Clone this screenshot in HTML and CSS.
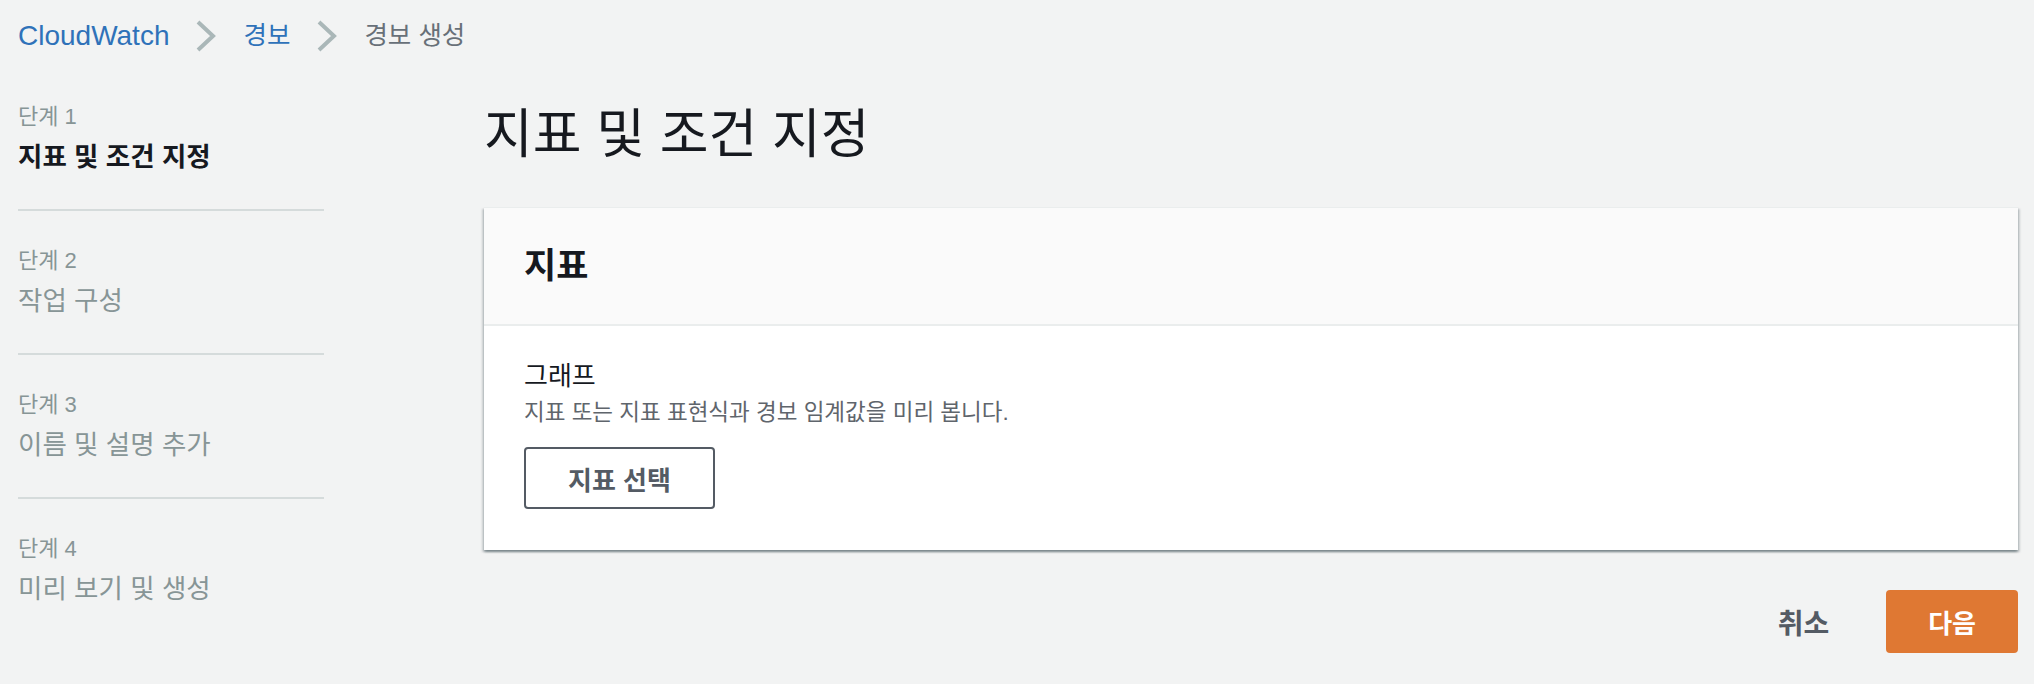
FILE: index.html
```html
<!DOCTYPE html>
<html lang="ko">
<head>
<meta charset="utf-8">
<title>경보 생성 - CloudWatch</title>
<link rel="stylesheet" href="styles.css">
</head>
<body>
<nav class="breadcrumbs">
  <a class="crumb crumb-en" href="#">CloudWatch</a>
  <svg class="chev" width="20" height="32" viewBox="0 0 20 32"><polyline points="2,2 17,16 2,30" fill="none" stroke="#aab7b8" stroke-width="4"/></svg>
  <a class="crumb crumb-ko" href="#">경보</a>
  <svg class="chev" width="20" height="32" viewBox="0 0 20 32"><polyline points="2,2 17,16 2,30" fill="none" stroke="#aab7b8" stroke-width="4"/></svg>
  <span class="crumb crumb-ko current">경보 생성</span>
</nav>
<div class="layout">
  <ol class="steps">
    <li class="step active"><div class="step-label">단계 1</div><div class="step-title">지표 및 조건 지정</div></li>
    <li class="step"><div class="step-label">단계 2</div><div class="step-title">작업 구성</div></li>
    <li class="step"><div class="step-label">단계 3</div><div class="step-title">이름 및 설명 추가</div></li>
    <li class="step"><div class="step-label">단계 4</div><div class="step-title">미리 보기 및 생성</div></li>
  </ol>
  <main class="main">
    <h1 class="page-title">지표 및 조건 지정</h1>
    <section class="card">
      <header class="card-header"><h2 class="card-title">지표</h2></header>
      <div class="card-body">
        <div class="field-label">그래프</div>
        <div class="field-desc">지표 또는 지표 표현식과 경보 임계값을 미리 봅니다.</div>
        <button class="btn btn-normal" type="button">지표 선택</button>
      </div>
    </section>
    <div class="actions">
      <button class="btn-link" type="button">취소</button>
      <button class="btn btn-primary" type="button">다음</button>
    </div>
  </main>
</div>
</body>
</html>
```
FILE: styles.css
```css
* { box-sizing: border-box; }
html, body { margin: 0; padding: 0; }
body {
  background: #f2f3f3;
  font-family: "Liberation Sans", "Noto Sans CJK KR", sans-serif;
  color: #16191f;
  width: 2034px;
  height: 684px;
  overflow: hidden;
}

.breadcrumbs {
  display: flex;
  align-items: center;
  gap: 27px;
  height: 56px;
  padding: 15px 18px 0;
}
.crumb { text-decoration: none; line-height: 41px; }
.crumb-en { font-size: 28px; color: #2f72b9; }
.crumb-ko { font-size: 25.5px; color: #2f72b9; }
.crumb.current { color: #687078; }
.chev { display: block; }

.layout {
  display: flex;
  gap: 160px;
  padding: 11px 16px 0 18px;
}

.steps {
  list-style: none;
  margin: 0;
  padding: 0;
  width: 306px;
  flex: none;
}
.step {
  padding: 34px 0 32px;
  border-bottom: 2px solid #d5dbdb;
}
.step:last-child { border-bottom: none; }
.step-label {
  font-size: 22px;
  line-height: 32px;
  color: #879596;
}
.step-title {
  margin-top: 4px;
  font-size: 26.5px;
  line-height: 40px;
  color: #879596;
}
.step.active .step-title { color: #16191f; font-weight: bold; }

.main { flex: 1; min-width: 0; }
.page-title {
  margin: 32px 0 36px;
  font-size: 53px;
  line-height: 72px;
  font-weight: normal;
  color: #16191f;
}

.card {
  background: #fff;
  border-top: 1px solid #eaeded;
  box-shadow: 0 2px 2px 0 rgba(0, 28, 36, 0.3), 2px 2px 2px 0 rgba(0, 28, 36, 0.15), -2px 2px 2px 0 rgba(0, 28, 36, 0.15);
}
.card-header {
  background: #fafafa;
  border-bottom: 2px solid #eaeded;
  padding: 36px 40px;
}
.card-title {
  margin: 0;
  font-size: 35px;
  line-height: 44px;
  font-weight: bold;
  color: #16191f;
}
.card-body {
  padding: 32px 40px 41px;
}
.field-label {
  font-size: 26px;
  line-height: 36px;
  color: #16191f;
}
.field-desc {
  margin-top: 4px;
  font-size: 22.5px;
  line-height: 30px;
  color: #5f656c;
}
.btn {
  font-family: inherit;
  font-weight: bold;
  border-radius: 4px;
  cursor: pointer;
}
.btn-normal {
  margin-top: 19px;
  height: 62px;
  background: #fff;
  border: 2px solid #545b64;
  color: #545b64;
  font-size: 26px;
  padding: 0 42px;
}

.actions {
  margin-top: 40px;
  display: flex;
  justify-content: flex-end;
  align-items: center;
  gap: 29px;
}
.btn-link {
  font-family: inherit;
  background: none;
  border: none;
  color: #545b64;
  font-weight: bold;
  font-size: 28px;
  padding: 0 28px;
  height: 63px;
}
.btn-primary {
  height: 63px;
  background: #df7833;
  border: none;
  color: #fff;
  font-size: 26px;
  padding: 0 42px;
}
```
